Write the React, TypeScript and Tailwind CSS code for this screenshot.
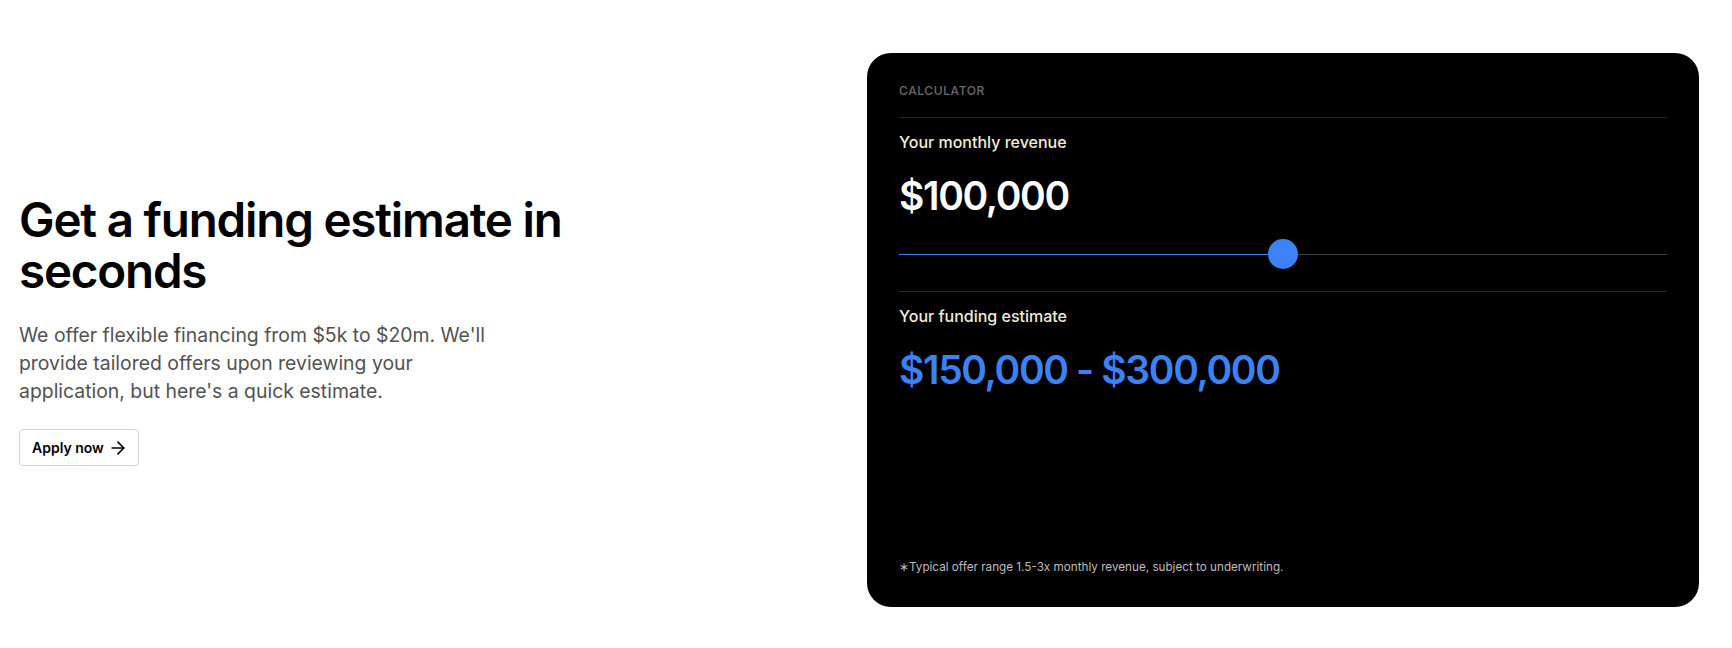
import React from 'react';
import { ArrowRight } from 'lucide-react';

export default function App() {
  const revenue = 100000;
  const pct = 50;
  const fmt = (n: number) => '$' + n.toLocaleString('en-US');

  return (
    <div className="min-h-[648px] bg-white flex items-center pl-[19px] pr-[33px] pt-[53px] pb-[41px] font-['Inter',sans-serif]">
      {/* Left intro */}
      <div className="flex-1">
        <h1 className="text-[47.5px] leading-[1.08] font-semibold tracking-tight text-black max-w-[600px]">
          Get a funding estimate in seconds
        </h1>
        <p className="mt-[25px] text-[19.4px] leading-[28px] text-[#525252] max-w-[480px]">
          We offer flexible financing from $5k to $20m. We'll provide tailored offers upon reviewing your
          application, but here's a quick estimate.
        </p>
        <button className="mt-6 flex items-center gap-1 h-[37px] pl-3 pr-2.5 border border-[#d4d4d8] rounded text-sm font-semibold text-black bg-white">
          Apply now
          <ArrowRight size={20} strokeWidth={2} />
        </button>
      </div>

      {/* Calculator card */}
      <div className="w-[832px] h-[554px] rounded-[24px] bg-black px-8 pt-[30px] pb-8 flex flex-col">
        <div className="pb-[18px] border-b border-[#262626]">
          <div className="text-xs font-medium tracking-wider text-[#6b6b6b]">CALCULATOR</div>
        </div>

        <div className="pt-3 pb-[22px] border-b border-[#262626]">
          <div className="text-base font-medium text-[#f3ecd6]">Your monthly revenue</div>
          <div className="mt-[18px] text-[39px] leading-[48px] font-semibold tracking-[-0.035em] text-white">
            {fmt(revenue)}
          </div>
          <div className="mt-[19px] relative h-[30px] flex items-center">
            <div className="w-full h-px bg-[#3f3f3f]">
              <div className="h-px bg-[#3b82f6]" style={{ width: `${pct}%` }} />
            </div>
            <div
              className="absolute top-0 w-[30px] h-[30px] -ml-[15px] rounded-full bg-[#3b82f6]"
              style={{ left: `${pct}%` }}
            />
          </div>
        </div>

        <div className="pt-3">
          <div className="text-base font-medium text-[#f3ecd6]">Your funding estimate</div>
          <div className="mt-[18px] text-[39px] leading-[48px] font-semibold tracking-[-0.035em] text-[#3b82f6]">
            {fmt(revenue * 1.5)} - {fmt(revenue * 3)}
          </div>
        </div>

        <p className="mt-auto text-[11.7px] leading-4 text-[#bdbdbd]">
          ∗Typical offer range 1.5-3x monthly revenue, subject to underwriting.
        </p>
      </div>
    </div>
  );
}
